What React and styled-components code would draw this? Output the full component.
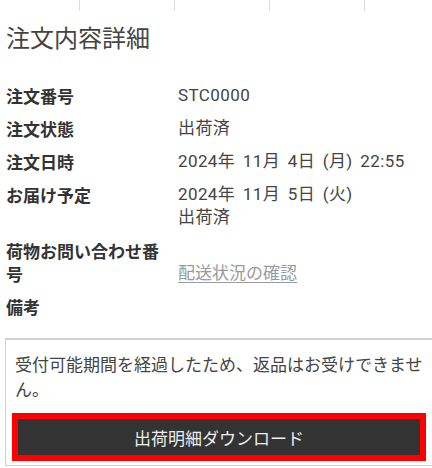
import React from "react";
import styled, { createGlobalStyle } from "styled-components";

const GlobalStyle = createGlobalStyle`
  body {
    margin: 0;
    background: #fff;
    overflow: hidden;
    font-family: Roboto, "Noto Sans CJK JP", sans-serif;
  }
`;

const details = [
  { label: "注文番号", value: ["STC0000"] },
  { label: "注文状態", value: ["出荷済"] },
  { label: "注文日時", value: ["2024年 11月 4日 (月) 22:55"] },
  { label: "お届け予定", value: ["2024年 11月 5日 (火)", "出荷済"] },
  { label: "荷物お問い合わせ番号", link: "配送状況の確認" },
  { label: "備考", value: [] },
];

const App = () => {
  return (
    <Page>
      <GlobalStyle />
      <TabStrip>
        <TabCell first />
        <TabCell />
        <TabCell />
        <TabCell />
        <TabCell />
      </TabStrip>
      <Content>
        <Title>注文内容詳細</Title>
        <DetailList>
          {details.map((row) => (
            <DetailRow key={row.label}>
              <Label>{row.label}</Label>
              {row.link ? (
                <Value alignEnd>
                  <TrackLink href="#">{row.link}</TrackLink>
                </Value>
              ) : (
                <Value>
                  {row.value.map((line) => (
                    <div key={line}>{line}</div>
                  ))}
                </Value>
              )}
            </DetailRow>
          ))}
        </DetailList>
        <NoticeBox>
          <NoticeText>
            受付可能期間を経過したため、返品はお受けできません。
          </NoticeText>
          <DownloadButton>出荷明細ダウンロード</DownloadButton>
        </NoticeBox>
      </Content>
    </Page>
  );
};

const Page = styled.div`
  width: 432px;
  height: 468px;
  overflow: hidden;
`;

const TabStrip = styled.div`
  display: flex;
  height: 11px;
`;

const TabCell = styled.div`
  flex: none;
  width: ${({ first }) => (first ? "79px" : "94px")};
  border-left: ${({ first }) => (first ? "none" : "1px solid #dcdcdc")};
`;

const Content = styled.div`
  padding: 0 6px;
`;

const Title = styled.h1`
  margin: 10px 0 31px;
  font-size: 24px;
  line-height: 32px;
  font-weight: 400;
  color: #444;
  font-family: "Noto Sans CJK JP", sans-serif;
`;

const DetailList = styled.dl`
  margin: 0;
  display: flex;
  flex-direction: column;
  gap: 10px;
`;

const DetailRow = styled.div`
  display: flex;
  gap: 12px;
  font-size: 17px;
  line-height: 23px;
  min-height: 23px;
`;

const Label = styled.dt`
  flex: none;
  width: 160px;
  font-weight: 700;
  color: #333;
  font-family: "Noto Sans CJK JP", sans-serif;
`;

const Value = styled.dd`
  margin: 0;
  color: #444;
  letter-spacing: 0.4px;
  word-spacing: 3px;
  align-self: ${({ alignEnd }) => (alignEnd ? "flex-end" : "flex-start")};
`;

const TrackLink = styled.a`
  color: #9a9a9a;
  letter-spacing: 0;
  text-decoration: underline;
  text-underline-offset: 3px;
`;

const NoticeBox = styled.div`
  margin: 20px 0 0 -1px;
  width: 410px;
  padding: 11px 9px 10px;
  border: 1px solid #d2d2d2;
  border-top-width: 2px;
  border-right: none;
`;

const NoticeText = styled.p`
  margin: 0;
  font-size: 17px;
  line-height: 25px;
  color: #444;
  font-family: "Noto Sans CJK JP", sans-serif;
`;

const DownloadButton = styled.button`
  display: block;
  margin: 18px 0 0 3px;
  width: 402px;
  height: 36px;
  border: none;
  outline: 6px solid #ff0000;
  background: #333;
  color: #eee;
  font-size: 17px;
  font-family: "Noto Sans CJK JP", sans-serif;
  cursor: pointer;
`;

export default App;
